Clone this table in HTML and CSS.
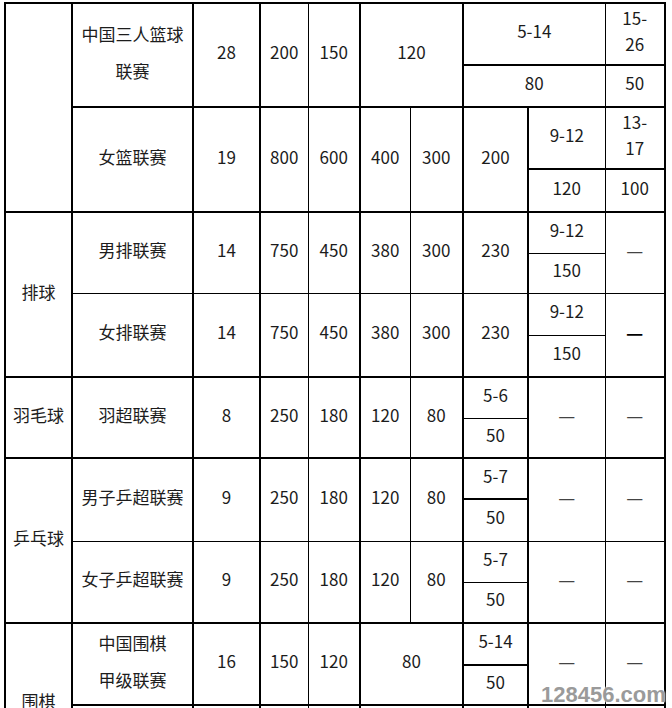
FILE: index.html
```html
<!DOCTYPE html>
<html lang="zh-CN">
<head>
<meta charset="utf-8">
<title>联赛名额表</title>
<link rel="stylesheet" href="styles.css">
</head>
<body>
<table class="sheet">
  <colgroup>
    <col class="c1"><col class="c2"><col class="c3"><col class="c4"><col class="c5">
    <col class="c6"><col class="c7"><col class="c8"><col class="c9"><col class="c10">
  </colgroup>
  <tbody>
    <tr class="h62 major">
      <td rowspan="4"></td>
      <td rowspan="2" class="name2">中国三人篮球<br>联赛</td>
      <td rowspan="2">28</td>
      <td rowspan="2">200</td>
      <td rowspan="2">150</td>
      <td rowspan="2" colspan="2">120</td>
      <td colspan="2">5-14</td>
      <td class="wrap">15-<br>26</td>
    </tr>
    <tr class="h42 thick">
      <td colspan="2">80</td>
      <td>50</td>
    </tr>
    <tr class="h62 major">
      <td rowspan="2">女篮联赛</td>
      <td rowspan="2">19</td>
      <td rowspan="2">800</td>
      <td rowspan="2">600</td>
      <td rowspan="2">400</td>
      <td rowspan="2">300</td>
      <td rowspan="2">200</td>
      <td>9-12</td>
      <td class="wrap">13-<br>17</td>
    </tr>
    <tr class="h43 thick">
      <td>120</td>
      <td>100</td>
    </tr>

    <tr class="h41 major">
      <td rowspan="4">排球</td>
      <td rowspan="2">男排联赛</td>
      <td rowspan="2">14</td>
      <td rowspan="2">750</td>
      <td rowspan="2">450</td>
      <td rowspan="2">380</td>
      <td rowspan="2">300</td>
      <td rowspan="2">230</td>
      <td>9-12</td>
      <td rowspan="2" class="dash">—</td>
    </tr>
    <tr class="h40"><td>150</td></tr>
    <tr class="h42">
      <td rowspan="2">女排联赛</td>
      <td rowspan="2">14</td>
      <td rowspan="2">750</td>
      <td rowspan="2">450</td>
      <td rowspan="2">380</td>
      <td rowspan="2">300</td>
      <td rowspan="2">230</td>
      <td>9-12</td>
      <td rowspan="2" class="dash strong">—</td>
    </tr>
    <tr class="h42"><td>150</td></tr>

    <tr class="h41 major">
      <td rowspan="2">羽毛球</td>
      <td rowspan="2">羽超联赛</td>
      <td rowspan="2">8</td>
      <td rowspan="2">250</td>
      <td rowspan="2">180</td>
      <td rowspan="2">120</td>
      <td rowspan="2">80</td>
      <td>5-6</td>
      <td rowspan="2" class="dash">—</td>
      <td rowspan="2" class="dash">—</td>
    </tr>
    <tr class="h40"><td>50</td></tr>

    <tr class="h41 major">
      <td rowspan="4">乒乓球</td>
      <td rowspan="2">男子乒超联赛</td>
      <td rowspan="2">9</td>
      <td rowspan="2">250</td>
      <td rowspan="2">180</td>
      <td rowspan="2">120</td>
      <td rowspan="2">80</td>
      <td>5-7</td>
      <td rowspan="2" class="dash">—</td>
      <td rowspan="2" class="dash">—</td>
    </tr>
    <tr class="h42 thick"><td>50</td></tr>
    <tr class="h41">
      <td rowspan="2">女子乒超联赛</td>
      <td rowspan="2">9</td>
      <td rowspan="2">250</td>
      <td rowspan="2">180</td>
      <td rowspan="2">120</td>
      <td rowspan="2">80</td>
      <td>5-7</td>
      <td rowspan="2" class="dash">—</td>
      <td rowspan="2" class="dash">—</td>
    </tr>
    <tr class="h41"><td>50</td></tr>

    <tr class="h41 major">
      <td rowspan="4" class="cat-last">围棋</td>
      <td rowspan="2" class="name2">中国围棋<br>甲级联赛</td>
      <td rowspan="2">16</td>
      <td rowspan="2">150</td>
      <td rowspan="2">120</td>
      <td rowspan="2" colspan="2">80</td>
      <td>5-14</td>
      <td rowspan="2" class="dash">—</td>
      <td rowspan="2" class="dash">—</td>
    </tr>
    <tr class="h40 thick"><td>50</td></tr>
    <tr class="h37 major">
      <td rowspan="2"></td>
      <td rowspan="2"></td>
      <td rowspan="2"></td>
      <td rowspan="2"></td>
      <td rowspan="2" colspan="2"></td>
      <td></td>
      <td rowspan="2"></td>
      <td rowspan="2"></td>
    </tr>
    <tr class="h37"><td></td></tr>
  </tbody>
</table>
<div class="watermark">128456.com</div>
</body>
</html>
```

FILE: styles.css
```css
html, body {
  margin: 0;
  padding: 0;
  background: #ffffff;
  height: 708px;
  overflow: hidden;
}

body {
  position: relative;
  font-family: "Noto Sans CJK SC", "Noto Sans", sans-serif;
  font-size: 17px;
  color: #1c1c1c;
}

.sheet {
  border-collapse: collapse;
  table-layout: fixed;
  width: 661px;
  margin: 2px 0 0 4px;
}

.sheet td {
  border: 1px solid #000;
  padding: 0 0 6px 0;
  text-align: center;
  vertical-align: middle;
  line-height: 20px;
  white-space: nowrap;
}

.c1 { width: 67px; border-left: 2px solid #000; }
.c2 { width: 121px; border-left: 2px solid #000; }
.c3 { width: 67px; border-left: 2px solid #000; }
.c4 { width: 48px; border-left: 2px solid #000; }
.c5 { width: 52px; border-left: 1px solid #000; }
.c6 { width: 50px; border-left: 2px solid #000; }
.c7 { width: 53px; border-left: 1px solid #000; }
.c8 { width: 65px; border-left: 2px solid #000; }
.c9 { width: 77px; border-left: 2px solid #000; }
.c10 { width: 60px; border-left: 1px solid #000; border-right: 2px solid #000; }

.sheet tr.major { border-top: 2px solid #000; }
.sheet tr.thick { border-top: 2px solid #000; }

.h62 { height: 62px; }
.h43 { height: 43px; }
.h42 { height: 42px; }
.h41 { height: 41px; }
.h40 { height: 40px; }
.h37 { height: 37px; }

.sheet td.name2 { line-height: 37px; }
.sheet td.wrap { line-height: 26px; }
.sheet td.cat-last { padding: 0; }

.sheet td.dash {
  font-size: 19px;
  color: #444;
}
.sheet td.dash.strong {
  font-weight: 700;
  color: #000;
}

.watermark {
  position: absolute;
  left: 541px;
  top: 684px;
  font-family: "Liberation Sans", Arial, sans-serif;
  font-weight: 700;
  font-size: 22px;
  line-height: 1;
  color: #9a9a9a;
  text-shadow: 0 0 2px #fff, 0 0 2px #fff;
}
```
